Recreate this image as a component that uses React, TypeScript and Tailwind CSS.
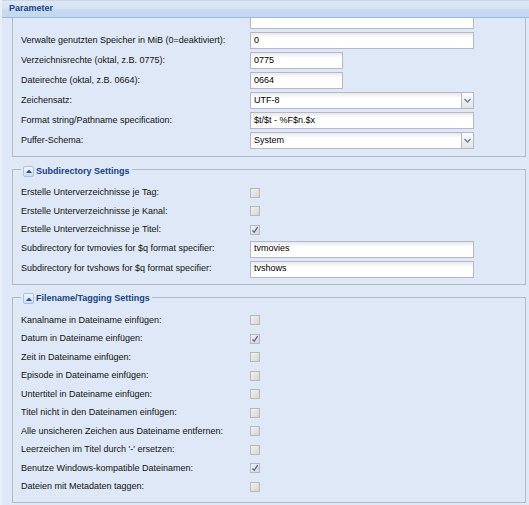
import React from 'react';

type TextRowProps = { label?: string; value: string; wide?: boolean };

function Field({ value, wide }: { value: string; wide?: boolean }) {
  return (
    <div
      className={`h-[17px] ${wide ? 'w-[224px]' : 'w-[93px]'} border border-[#b5b8c8] bg-[linear-gradient(to_bottom,#e9e9e9,#ffffff_5px)] px-[3px] flex items-center text-black`}
    >
      {value}
    </div>
  );
}

function TextRow({ label, value, wide }: TextRowProps) {
  return (
    <div className="h-[20px] flex items-center">
      <div className="w-[229px] shrink-0 truncate">{label}</div>
      <Field value={value} wide={wide} />
    </div>
  );
}

function ComboRow({ label, value }: { label: string; value: string }) {
  return (
    <div className="h-[20px] flex items-center">
      <div className="w-[229px] shrink-0 truncate">{label}</div>
      <div className="h-[17px] w-[224px] flex border border-[#b5b8c8] bg-[linear-gradient(to_bottom,#e9e9e9,#ffffff_5px)]">
        <div className="flex-1 px-[3px] flex items-center text-black">{value}</div>
        {/* trigger */}
        <div className="w-[12px] border-l border-[#b5b8c8] bg-[linear-gradient(to_bottom,#fdfdfd,#e3e3e3)] flex items-center justify-center">
          <svg width="7" height="5" viewBox="0 0 7 5">
            <path d="M0.5 1 L3.5 4 L6.5 1" fill="none" stroke="#6b7fa3" strokeWidth="1.4" />
          </svg>
        </div>
      </div>
    </div>
  );
}

function Check({ checked }: { checked?: boolean }) {
  return (
    <div className="w-[10px] h-[10px] border border-[#b9b9b9] bg-[linear-gradient(135deg,#f0f0f0,#d6d6d6)] flex items-center justify-center">
      {checked && (
        <svg width="8" height="8" viewBox="0 0 8 8">
          <path d="M1.5 4.5 L3.2 6.3 L6.6 1.2" fill="none" stroke="#4a63a6" strokeWidth="1.3" />
        </svg>
      )}
    </div>
  );
}

function CheckRow({ label, checked }: { label: string; checked?: boolean }) {
  return (
    <div className="h-[18.5px] flex items-center">
      <div className="w-[229px] shrink-0 truncate">{label}</div>
      <Check checked={checked} />
    </div>
  );
}

function Section({ title, className, children }: { title: string; className: string; children: React.ReactNode }) {
  return (
    <fieldset className={`border border-[#b5b8c8] px-[8px] pt-[7px] ${className}`}>
      <legend className="px-[2px] h-[14px] flex items-end gap-[2px]">
        <span className="w-[11px] h-[11px] rounded-[2px] border border-[#a9c0e0] bg-[linear-gradient(to_bottom,#f3f7fc,#cddcf0)] flex items-center justify-center">
          <svg width="6" height="4" viewBox="0 0 6 4">
            <path d="M0 4 L3 0.5 L6 4 Z" fill="#2f4f8f" />
          </svg>
        </span>
        <span className="font-bold text-[#15428b] leading-[11px]">{title}</span>
      </legend>
      {children}
    </fieldset>
  );
}

export default function App() {
  return (
    <div className="w-[529px] h-[505px] flex flex-col bg-[#dfe8f6] border-l-2 border-[#e8eef8] overflow-hidden font-['Liberation_Sans',Arial,sans-serif] text-[9px] text-[#111]">
      {/* panel header */}
      <div className="h-[18px] shrink-0 border-t border-b border-t-[#c9d8ec] border-b-[#99bbe8] bg-[linear-gradient(to_bottom,#dde8f6_0%,#d7e4f4_45%,#c9dbf2_55%,#c4d7ef_100%)] flex items-center pl-[7px]">
        <span className="font-bold text-[#15428b]">Parameter</span>
      </div>

      {/* body, scrolled */}
      <div className="flex-1 overflow-hidden pl-[10px] pr-[3px]">
        <div className="-mt-[14.5px]">
          <fieldset className="border border-[#b5b8c8] px-[8px] pt-[6px] pb-[5px]">
            <TextRow value="" wide />
            <TextRow label="Verwalte genutzten Speicher in MiB (0=deaktiviert):" value="0" wide />
            <TextRow label="Verzeichnisrechte (oktal, z.B. 0775):" value="0775" />
            <TextRow label="Dateirechte (oktal, z.B. 0664):" value="0664" />
            <ComboRow label="Zeichensatz:" value="UTF-8" />
            <TextRow label="Format string/Pathname specification:" value="$t/$t - %F$n.$x" wide />
            <ComboRow label="Puffer-Schema:" value="System" />
          </fieldset>

          <Section title="Subdirectory Settings" className="mt-[6px] pb-[5px]">
            <CheckRow label="Erstelle Unterverzeichnisse je Tag:" />
            <CheckRow label="Erstelle Unterverzeichnisse je Kanal:" />
            <CheckRow label="Erstelle Unterverzeichnisse je Titel:" checked />
            <TextRow label="Subdirectory for tvmovies for $q format specifier:" value="tvmovies" wide />
            <TextRow label="Subdirectory for tvshows for $q format specifier:" value="tvshows" wide />
          </Section>

          <Section title="Filename/Tagging Settings" className="mt-[5px] pb-[6px]">
            <CheckRow label="Kanalname in Dateiname einfügen:" />
            <CheckRow label="Datum in Dateiname einfügen:" checked />
            <CheckRow label="Zeit in Dateiname einfügen:" />
            <CheckRow label="Episode in Dateiname einfügen:" />
            <CheckRow label="Untertitel in Dateiname einfügen:" />
            <CheckRow label="Titel nicht in den Dateinamen einfügen:" />
            <CheckRow label="Alle unsicheren Zeichen aus Dateiname entfernen:" />
            <CheckRow label="Leerzeichen im Titel durch '-' ersetzen:" />
            <CheckRow label="Benutze Windows-kompatible Dateinamen:" checked />
            <CheckRow label="Dateien mit Metadaten taggen:" />
          </Section>
        </div>
      </div>
    </div>
  );
}
